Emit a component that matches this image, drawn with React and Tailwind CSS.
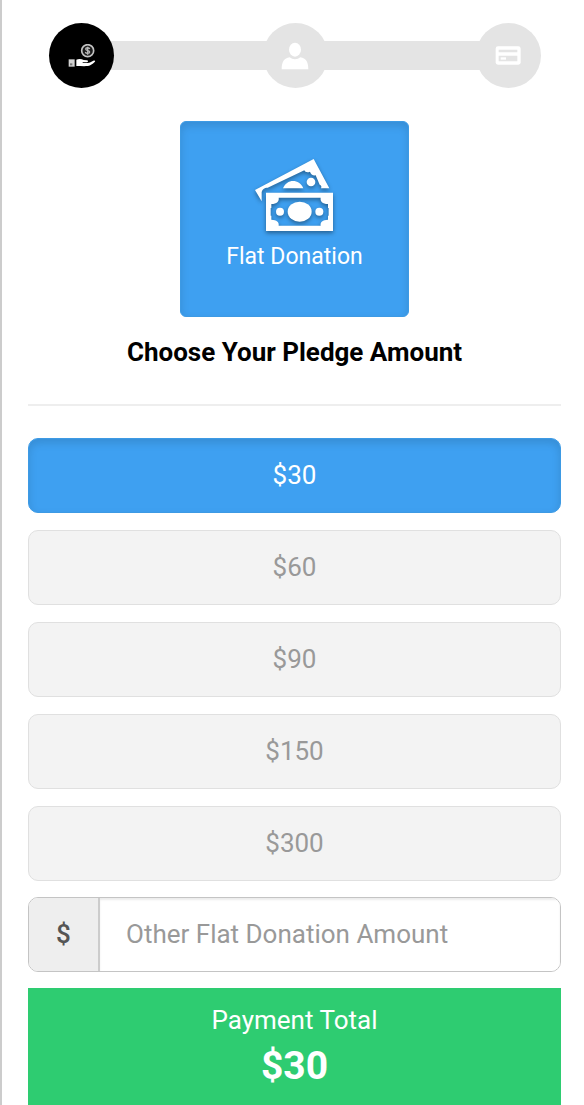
import React, { useState } from 'react';

const AMOUNTS = [30, 60, 90, 150, 300];

const HandCoinIcon = () => (
  <svg viewBox="0 0 84 72" className="w-7 h-6" aria-hidden="true">
    <circle cx="59" cy="20" r="18" fill="#1c1c1c" stroke="#c4c4c4" strokeWidth="5" />
    <path d="M65 15c-1-5-12-5-12 0s12 4 12 9-11 6-13 0M59 8v24" fill="none" stroke="#b8b8b8" strokeWidth="4" />
    <path d="M2 46h18v22H2z" fill="#d2d2d2" />
    <path d="M6 58h7v6H6z" fill="#777" />
    <path
      d="M25 47c8-3 16-2 22 1l10 1c4 0 4 6 0 6H44v2h15c6 0 11-5 17-7 5-2 7 1 4 4-7 6-12 11-20 12-12 1-23 0-35 0z"
      fill="#fff"
    />
  </svg>
);

const UserIcon = () => (
  <svg viewBox="0 0 84 84" className="w-7 h-7" aria-hidden="true" fill="#fff">
    <ellipse cx="42" cy="23" rx="18" ry="21" />
    <path d="M2 82c0-22 7-34 24-36 9 8 23 8 32 0 17 2 24 14 24 36z" />
  </svg>
);

const CardIcon = () => (
  <svg viewBox="0 0 84 60" className="w-7 h-5" aria-hidden="true">
    <rect x="2" y="1" width="75" height="55" rx="7" fill="#fff" />
    <path d="M11 11h56v8H11zM11 29h56v17H11z" fill="#e4e4e4" />
    <path d="M17 34h16v7H17z" fill="#fff" />
  </svg>
);

const MoneyIcon = () => (
  <svg
    viewBox="0 0 300 270"
    className="w-[100px] h-[90px] drop-shadow-[0_2px_2px_rgba(0,0,0,0.4)]"
    aria-hidden="true"
    fill="#fff"
    fillRule="evenodd"
  >
    {/* back bill */}
    <path d="M30 120L206 27L253 115H228C231 109 228 106 224 104L212 76C204 78 197 72 195 65C187 69 180 66 178 61L68 113C58 113 51 119 50 127V154Z" />
    <path d="M114 115C124 87 162 84 175 115Z" />
    <circle cx="198" cy="96" r="13" />
    {/* front bill */}
    <path d="M63 128H264V243H63ZM101 143C103 154 96 162 79 162V174H77V197H79V209C95 210 103 216 101 227H227C225 216 233 210 249 209V197H251V174H249V162C232 162 225 154 227 143Z" />
    <ellipse cx="164" cy="185" rx="36" ry="30" />
    <circle cx="105" cy="185" r="12" />
    <circle cx="223" cy="185" r="12" />
  </svg>
);

const Steps = () => {
  const circle = 'flex items-center justify-center shrink-0 w-[65px] h-[65px] rounded-full';
  return (
    <nav aria-label="Donation steps" className="flex items-center pl-[21px] pr-5">
      <button type="button" aria-label="Donation" aria-current="step" className={`${circle} z-10 bg-black`}>
        <HandCoinIcon />
      </button>
      <div className="flex-1 h-[29px] -mx-2 bg-[#e4e4e4]" />
      <button type="button" aria-label="Your details" className={`${circle} bg-[#e4e4e4]`}>
        <UserIcon />
      </button>
      <div className="flex-1 h-[29px] -mx-2 bg-[#e4e4e4]" />
      <button type="button" aria-label="Payment" className={`${circle} bg-[#e4e4e4]`}>
        <CardIcon />
      </button>
    </nav>
  );
};

const App = () => {
  const [amount, setAmount] = useState(30);
  const [other, setOther] = useState('');

  const selectAmount = (value) => {
    setAmount(value);
    setOther('');
  };

  const total = other ? Number(other) || 0 : amount;

  return (
    <main className="min-h-screen border-l-2 border-[#ccc] bg-white pl-[26px] pr-[23px] pt-[23px] font-[Roboto,sans-serif]">
      <Steps />

      <button
        type="button"
        className="mx-auto mt-[33px] flex h-[196px] w-[229px] flex-col items-center rounded-md border border-[#3d9ae4] bg-[#3ea0f1] pt-7 text-white shadow-[inset_0_4px_8px_rgba(0,0,0,0.12)]"
      >
        <MoneyIcon />
        <span className="text-[23px] leading-[34px]">Flat Donation</span>
      </button>

      <h1 className="mt-[19px] text-center text-[26px] font-bold leading-8 text-black">Choose Your Pledge Amount</h1>
      <hr className="mt-9 border-t-2 border-[#eee]" />

      <div className="mt-8 flex flex-col gap-[17px]">
        {AMOUNTS.map(value => (
          <button
            key={value}
            type="button"
            aria-pressed={!other && amount === value}
            onClick={() => selectAmount(value)}
            className={`h-[75px] w-full rounded-[10px] border text-[26px] ${
              !other && amount === value
                ? 'border-[#3d9ae4] bg-[#3ea0f1] text-white shadow-[inset_0_4px_8px_rgba(0,0,0,0.12)]'
                : 'border-[#e0e0e0] bg-[#f3f3f3] text-[#999]'
            }`}
          >
            ${value}
          </button>
        ))}
      </div>

      <div className="mt-4 flex h-[75px] overflow-hidden rounded-[10px] border border-[#c4c4c4]">
        <label htmlFor="other-amount" className="flex w-[71px] shrink-0 items-center justify-center border-r-2 border-[#ccc] bg-[#eee] text-[26px] font-medium text-[#555]">
          $
        </label>
        <input
          id="other-amount"
          type="text"
          inputMode="decimal"
          aria-label="Other Flat Donation Amount"
          placeholder="Other Flat Donation Amount"
          value={other}
          onChange={(e) => setOther(e.target.value)}
          className="min-w-0 flex-1 bg-white px-[26px] text-[26px] text-[#555] shadow-[inset_0_2px_2px_rgba(0,0,0,0.08)] outline-none placeholder:text-[#999]"
        />
      </div>

      <div className="mt-4 bg-[#2ecc71] pb-3 pt-4 text-center text-white">
        <div className="text-[26px] leading-8">Payment Total</div>
        <div className="text-[39px] font-bold leading-[60px]">${total}</div>
      </div>
    </main>
  );
};

export default App;
